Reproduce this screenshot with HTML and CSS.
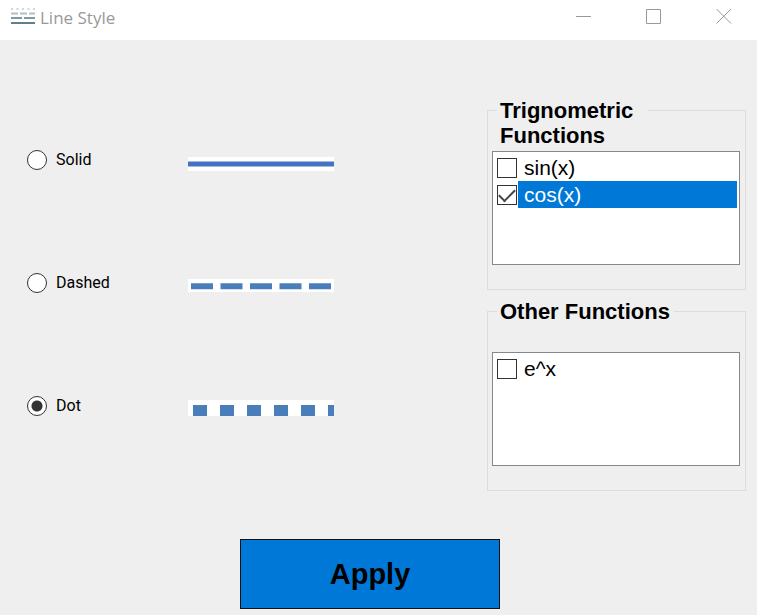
FILE: index.html
```
<!DOCTYPE html>
<html lang="en">
<head>
<meta charset="utf-8">
<title>Line Style</title>
<link rel="stylesheet" href="styles.css">
</head>
<body>
<header class="titlebar">
  <svg class="app-icon" width="24" height="18" viewBox="0 0 24 18" aria-hidden="true">
    <path d="M0 2H24" stroke="#d2d4d5" stroke-width="2" stroke-dasharray="2 3.5"/>
    <path d="M0 6.5H7M9 6.5H16M18 6.5H24" stroke="#b3bdc3" stroke-width="2"/>
    <path d="M0 11H11M13 11H24" stroke="#81969f" stroke-width="2"/>
    <path d="M0 16H24" stroke="#607f8e" stroke-width="2"/>
  </svg>
  <h1 class="title">Line Style</h1>
  <div class="window-buttons">
    <button type="button" aria-label="Minimize"><svg width="16" height="16" viewBox="0 0 16 16"><path d="M0 8.5H15"/></svg></button>
    <button type="button" aria-label="Maximize"><svg width="16" height="16" viewBox="0 0 16 16"><path d="M.5 1.5H14.5V15.5H.5Z"/></svg></button>
    <button type="button" aria-label="Close"><svg width="16" height="16" viewBox="0 0 16 16"><path d="M.5 1L15 15.5M15 1L.5 15.5"/></svg></button>
  </div>
</header>
<form class="content">
  <div class="columns">
    <div class="styles" role="radiogroup" aria-label="Line style">
      <div class="style-row">
        <label><input type="radio" name="style">Solid</label>
        <svg class="sample" width="146" height="22" viewBox="0 0 146 22" aria-hidden="true"><path fill="#fff" d="M0 8H146V22H0Z"/><path d="M0 15H146" stroke="#4472c4" stroke-width="5"/></svg>
      </div>
      <div class="style-row">
        <label><input type="radio" name="style">Dashed</label>
        <svg class="sample" width="146" height="22" viewBox="0 0 146 22" aria-hidden="true"><path fill="#fff" d="M0 7H146V20H0Z"/><path d="M3 14.2H143" stroke="#4a7ebb" stroke-width="6" stroke-dasharray="22 7.5"/></svg>
      </div>
      <div class="style-row">
        <label><input type="radio" name="style" checked>Dot</label>
        <svg class="sample" width="146" height="22" viewBox="0 0 146 22" aria-hidden="true"><path fill="#fff" d="M0 5H146V21H0Z"/><path d="M5 15.5H146" stroke="#4a7ebb" stroke-width="11" stroke-dasharray="14 13"/></svg>
      </div>
    </div>
    <div class="groups">
      <fieldset>
        <legend class="wrapped">Trignometric Functions</legend>
        <div class="list">
          <label class="item"><input type="checkbox"><span>sin(x)</span></label>
          <label class="item selected"><input type="checkbox" checked><span>cos(x)</span></label>
        </div>
      </fieldset>
      <fieldset>
        <legend>Other Functions</legend>
        <div class="list">
          <label class="item"><input type="checkbox"><span>e^x</span></label>
        </div>
      </fieldset>
    </div>
  </div>
  <div class="actions"><button class="apply" type="button">Apply</button></div>
</form>
</body>
</html>
```
FILE: styles.css
```
* { box-sizing: border-box; }

body {
  margin: 0;
  background: #efefef;
  color: #000;
  font-family: "Liberation Sans", Arial, sans-serif;
}

.titlebar {
  display: flex;
  height: 40px;
  padding: 0 0 0 11px;
  background: #fff;
}

.app-icon { margin-top: 7px; }

.title {
  margin: 0 0 0 5px;
  font: 400 17px/36px "Open Sans", sans-serif;
  color: #999;
}

.window-buttons {
  display: flex;
  margin-left: auto;
}

.window-buttons button {
  display: flex;
  justify-content: center;
  width: 70px;
  padding: 8px 0 0 3px;
  border: 0;
  background: none;
}

.window-buttons path {
  fill: none;
  stroke: #999;
}

.columns {
  display: grid;
  grid-template-columns: 1fr 259px;
  padding: 58px 11px 0 27px;
}

.styles {
  display: flex;
  flex-direction: column;
  gap: 101px;
  padding-top: 51px;
}

.style-row {
  display: grid;
  grid-template-columns: 161px 146px;
  height: 22px;
}

.style-row label {
  display: flex;
  align-items: center;
  gap: 9px;
  font: 16px/22px Roboto, sans-serif;
}

input {
  appearance: none;
  flex: none;
  width: 20px;
  height: 20px;
  margin: 0;
  border: 1px solid #333;
  background: #fff;
}

input[type="radio"] { border-radius: 50%; }

input[type="radio"]:checked {
  background: radial-gradient(circle, #333 5px, #fff 6px);
}

input[type="checkbox"] {
  display: flex;
  justify-content: center;
  padding-top: 3px;
}

input[type="checkbox"]:checked::before {
  content: "";
  width: 14px;
  height: 7px;
  border: solid #444;
  border-width: 0 0 2px 2px;
  transform: rotate(-45deg);
}

.groups {
  display: flex;
  flex-direction: column;
  gap: 9px;
}

fieldset {
  min-width: 0;
  margin: 0;
  padding: 29px 5px 24px 4px;
  border: 1px solid #dcdcdc;
}

legend {
  height: 24px;
  margin-left: 5px;
  padding: 0 4px 0 3px;
  font-size: 22px;
  font-weight: 700;
  line-height: 25px;
}

.wrapped { width: 151px; }

.list {
  height: 114px;
  padding: 2px 2px 2px 4px;
  border: 1px solid #828790;
  background: #fff;
}

.item {
  display: flex;
  align-items: center;
  gap: 1px;
  height: 27px;
  font-size: 21px;
  line-height: 27px;
}

.item span {
  flex: 1;
  padding-left: 6px;
}

.selected span {
  background: #0078d7;
  color: #fff;
}

.actions {
  padding: 48px 17px 6px 0;
  text-align: center;
}

.apply {
  width: 260px;
  height: 70px;
  border: 1px solid #111;
  background: #0078d7;
  color: #000;
  font: 700 29px "Liberation Sans", Arial, sans-serif;
}
```
